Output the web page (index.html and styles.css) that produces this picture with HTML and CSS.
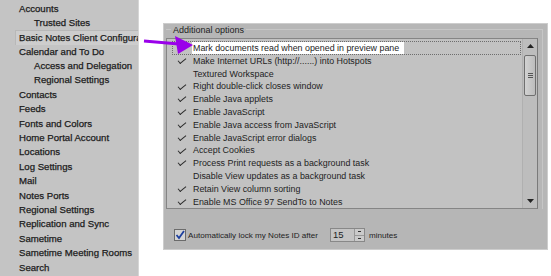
FILE: index.html
```html
<!DOCTYPE html>
<html>
<head>
<meta charset="utf-8">
<link rel="stylesheet" href="styles.css">
</head>
<body>
<div class="screen">
  <nav class="sidebar">
    <ul class="tree">
      <li class="l0">Accounts</li>
      <li class="l1">Trusted Sites</li>
      <li class="l0 sel">Basic Notes Client Configuration</li>
      <li class="l0">Calendar and To Do</li>
      <li class="l1">Access and Delegation</li>
      <li class="l1">Regional Settings</li>
      <li class="l0">Contacts</li>
      <li class="l0">Feeds</li>
      <li class="l0">Fonts and Colors</li>
      <li class="l0">Home Portal Account</li>
      <li class="l0">Locations</li>
      <li class="l0">Log Settings</li>
      <li class="l0">Mail</li>
      <li class="l0">Notes Ports</li>
      <li class="l0">Regional Settings</li>
      <li class="l0">Replication and Sync</li>
      <li class="l0">Sametime</li>
      <li class="l0">Sametime Meeting Rooms</li>
      <li class="l0">Search</li>
    </ul>
  </nav>
  <main class="content">
    <section class="panel">
      <div class="group">
        <div class="legend">Additional options</div>
        <div class="listbox">
          <ul class="opts">
            <li class="opt focus"><span class="chk"></span><span class="lbl">Mark documents read when opened in preview pane</span></li>
            <li class="opt on"><span class="chk"></span><span class="lbl">Make Internet URLs (http://......) into Hotspots</span></li>
            <li class="opt"><span class="chk"></span><span class="lbl">Textured Workspace</span></li>
            <li class="opt on"><span class="chk"></span><span class="lbl">Right double-click closes window</span></li>
            <li class="opt on"><span class="chk"></span><span class="lbl">Enable Java applets</span></li>
            <li class="opt on"><span class="chk"></span><span class="lbl">Enable JavaScript</span></li>
            <li class="opt on"><span class="chk"></span><span class="lbl">Enable Java access from JavaScript</span></li>
            <li class="opt on"><span class="chk"></span><span class="lbl">Enable JavaScript error dialogs</span></li>
            <li class="opt on"><span class="chk"></span><span class="lbl">Accept Cookies</span></li>
            <li class="opt on"><span class="chk"></span><span class="lbl">Process Print requests as a background task</span></li>
            <li class="opt"><span class="chk"></span><span class="lbl">Disable View updates as a background task</span></li>
            <li class="opt on"><span class="chk"></span><span class="lbl">Retain View column sorting</span></li>
            <li class="opt on"><span class="chk"></span><span class="lbl">Enable MS Office 97 SendTo to Notes</span></li>
          </ul>
          <div class="scrollbar">
            <div class="sb-btn"><svg width="7" height="4" viewBox="0 0 7 4"><path d="M0 4 L3.5 0 L7 4 Z" fill="#222"/></svg></div>
            <div class="sb-track">
              <div class="thumb"><span class="grip"></span></div>
            </div>
            <div class="sb-btn"><svg width="7" height="4" viewBox="0 0 7 4"><path d="M0 0 L3.5 4 L7 0 Z" fill="#222"/></svg></div>
          </div>
        </div>
      </div>
      <div class="lockrow">
        <span class="cbox"><svg width="10" height="10" viewBox="0 0 10 10"><path d="M1.5 5 L4 8 L9 1" fill="none" stroke="#1d3f9e" stroke-width="1.8"/></svg></span>
        <span class="locktext">Automatically lock my Notes ID after</span>
        <span class="spin">
          <span class="spin-val">15</span>
          <span class="spin-btns"><span class="sp-up"></span><span class="sp-dn"></span></span>
        </span>
        <span class="locktext">minutes</span>
      </div>
    </section>
  </main>
  <svg class="arrow" width="60" height="24" viewBox="0 0 60 24">
    <line x1="1" y1="7" x2="36" y2="10" stroke="#9a00ea" stroke-width="3.2"/>
    <polygon points="32,2 50,11 35,20" fill="#9a00ea"/>
  </svg>
</div>
</body>
</html>
```
FILE: styles.css
```css
* { box-sizing: border-box; }
html, body { margin: 0; padding: 0; background: #ffffff; }
body {
  font-family: "Liberation Sans", Arial, sans-serif;
  color: #1b1b1b;
}
.screen {
  position: relative;
  width: 551px;
  height: 276px;
  display: flex;
  overflow: hidden;
}
.sidebar {
  width: 139px;
  height: 276px;
  background: #c4c4c4;
  border-right: 1px solid #d6d6d6;
  flex: none;
  overflow: hidden;
}
.tree {
  list-style: none;
  margin: 0;
  padding: 1.5px 0 0 0;
}
.tree li {
  height: 14.4px;
  line-height: 14.4px;
  font-size: 9.6px;
  white-space: nowrap;
  overflow: hidden;
  -webkit-text-stroke: 0.25px #1b1b1b;
}
.tree .l0 { padding-left: 19px; }
.tree .l1 { padding-left: 34px; }
.tree .sel {
  margin-left: 15px;
  padding-left: 3px;
  background: #cdcdcd;
  border-top: 1px solid #b8b8b8;
  border-left: 1px solid #b8b8b8;
  line-height: 13.4px;
}
.content {
  flex: 1;
  padding: 23px 0 0 24px;
}
.panel {
  width: 385px;
  height: 227px;
  background: #b6b6b6;
  border: 1px solid #cdcdcd;
  display: flex;
  flex-direction: column;
  padding: 0 4px 0 2px;
}
.group {
  border-right: 1px solid #c6c6c6;
  border-top: 1px solid #c6c6c6;
  margin-top: 5px;
  position: relative;
  padding: 8px 4px 0 0;
}
.legend {
  position: absolute;
  top: -5px;
  left: 5px;
  padding: 0 2px;
  background: #b6b6b6;
  font-size: 9px;
  line-height: 11px;
  color: #1e1e1e;
}
.listbox {
  height: 171px;
  width: 372px;
  background: #c2c2c2;
  border: 1px solid #858585;
  border-right-color: #7a7a7a;
  display: flex;
  overflow: hidden;
}
.opts {
  list-style: none;
  margin: 0;
  padding: 2px 0 0 5px;
  flex: 1;
}
.opt {
  height: 12.8px;
  display: flex;
  align-items: center;
  font-size: 8.9px;
  white-space: nowrap;
  color: #1e1e1e;
}
.opt .chk {
  width: 21px;
  height: 12.8px;
  flex: none;
  position: relative;
}
.opt.on .chk::before {
  content: "";
  position: absolute;
  left: 8px;
  top: 1.5px;
  width: 3px;
  height: 7px;
  border-right: 1.4px solid #2a2a2a;
  border-bottom: 1.4px solid #2a2a2a;
  transform: rotate(50deg);
}
.opt.focus {
  outline: 1px dotted #6d6d6d;
  outline-offset: -1px;
  margin-right: 1px;
  height: 13.5px;
}
.opt.focus .lbl {
  background: #ffffff;
  padding: 1px 5px 1px 1px;
  margin-left: -1px;
}
.scrollbar {
  width: 15px;
  flex: none;
  display: flex;
  flex-direction: column;
  background: #bdbdbd;
  border-left: 1px solid #b0b0b0;
}
.sb-btn {
  height: 14px;
  display: flex;
  align-items: center;
  justify-content: center;
  flex: none;
}
.sb-track {
  flex: 1;
  padding: 2px 1px 0 1px;
}
.thumb {
  height: 41px;
  background: linear-gradient(to right, #d2d2d2, #bcbcbc);
  border: 1px solid #6f6f6f;
  border-radius: 2px;
  display: flex;
  align-items: center;
  justify-content: center;
}
.grip {
  width: 5px;
  height: 5px;
  border-top: 1px solid #555;
  border-bottom: 1px solid #555;
  position: relative;
}
.grip::after {
  content: "";
  position: absolute;
  left: 0; right: 0; top: 1px;
  border-top: 1px solid #555;
}
.lockrow {
  display: flex;
  align-items: center;
  margin-top: 19px;
  padding-left: 8px;
  height: 14px;
  font-size: 8.1px;
  color: #1e1e1e;
}
.cbox {
  width: 12px;
  height: 12px;
  border: 1px solid #6b6b6b;
  background: #d4d4d4;
  display: flex;
  align-items: center;
  justify-content: center;
  margin-right: 2px;
}
.locktext { white-space: nowrap; }
.spin {
  display: flex;
  height: 14px;
  margin: 0 4px 0 12px;
  border: 1px solid #888;
  background: #c4c4c4;
}
.spin-val {
  width: 23px;
  padding-left: 2px;
  line-height: 12px;
  font-size: 9.5px;
}
.spin-btns {
  width: 10px;
  display: flex;
  flex-direction: column;
  border-left: 1px solid #999;
}
.sp-up, .sp-dn {
  flex: 1;
  position: relative;
  background: #cacaca;
}
.sp-up { border-bottom: 1px solid #999; }
.sp-up::after, .sp-dn::after {
  content: "";
  position: absolute;
  left: 3px; top: 2px;
  width: 3px; height: 1px;
  background: #333;
}
.arrow {
  position: absolute;
  left: 143px;
  top: 34px;
}
```
